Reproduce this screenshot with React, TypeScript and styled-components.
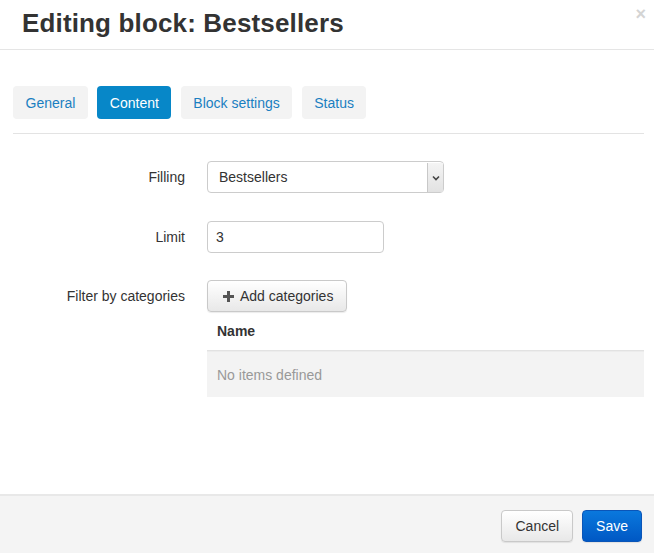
import React from "react";
import styled, { createGlobalStyle } from "styled-components";

const Global = createGlobalStyle`
  html, body { margin: 0; padding: 0; background: #fff; }
  body { font-family: "Liberation Sans", Arial, sans-serif; font-size: 14px; color: #333; }
  #root { height: 100vh; }
`;

const Dialog = styled.div`
  height: 100vh;
  display: flex;
  flex-direction: column;
  box-sizing: border-box;
`;

const Header = styled.div`
  position: relative;
  height: 50px;
  box-sizing: border-box;
  border-bottom: 1px solid #e5e5e5;
  padding: 0 0 0 22px;
  display: flex;
  align-items: center;
`;

const Title = styled.h3`
  margin: 0;
  margin-top: -3px;
  font-size: 26px;
  font-weight: bold;
  color: #333;
  letter-spacing: 0.15px;
`;

const Close = styled.span`
  position: absolute;
  right: 8px;
  top: 6px;
  font-size: 18px;
  font-weight: bold;
  color: #d4d4d4;
  line-height: 16px;
`;

const Body = styled.div`
  flex: 1;
  padding: 36px 10px 0 13px;
`;

const Tabs = styled.div`
  display: flex;
  gap: 9.5px;
  padding-bottom: 14px;
  border-bottom: 1px solid #e3e3e3;
`;

const Tab = styled.div<{ $active?: boolean }>`
  height: 33px;
  box-sizing: border-box;
  padding: 0 12.5px;
  display: flex;
  align-items: center;
  border-radius: 4px;
  font-size: 14px;
  background: ${(p) => (p.$active ? "#0787c8" : "#f3f3f3")};
  color: ${(p) => (p.$active ? "#fff" : "#1a7fc1")};
`;

const Form = styled.div`
  padding-top: 27px;
  display: flex;
  flex-direction: column;
  gap: 27.5px;
`;

const Row = styled.div`
  display: grid;
  grid-template-columns: 172px 1fr;
  column-gap: 22px;
  align-items: start;
`;

const Label = styled.label`
  text-align: right;
  font-size: 14px;
  color: #333;
  line-height: 32px;
`;

const SelectBox = styled.div`
  position: relative;
  width: 237px;
  height: 32px;
  box-sizing: border-box;
  border: 1px solid #ccc;
  border-radius: 4px;
  display: flex;
  align-items: center;
  padding-left: 11px;
  font-size: 14px;
  color: #333;
`;

const SelectArrow = styled.div`
  position: absolute;
  right: 0;
  top: 1px;
  bottom: 0;
  width: 16px;
  box-sizing: border-box;
  border-left: 1px solid #c8c8c8;
  background: linear-gradient(#f4f4f4, #e2e2e2);
  display: flex;
  align-items: center;
  justify-content: center;
`;

const Input = styled.div`
  width: 177px;
  height: 32px;
  box-sizing: border-box;
  border: 1px solid #ccc;
  border-radius: 4px;
  display: flex;
  align-items: center;
  padding-left: 8px;
  font-size: 14px;
  color: #333;
`;

const Field = styled.div`
  display: flex;
  flex-direction: column;
`;

const Button = styled.button<{ $primary?: boolean }>`
  height: 32px;
  box-sizing: border-box;
  border-radius: 4px;
  font-family: "Liberation Sans", Arial, sans-serif;
  font-size: 14px;
  padding: 0 13px;
  display: inline-flex;
  align-items: center;
  gap: 6px;
  cursor: pointer;
  border: 1px solid ${(p) => (p.$primary ? "#0a55b8" : "#c9c9c9")};
  color: ${(p) => (p.$primary ? "#fff" : "#333")};
  background: ${(p) =>
    p.$primary
      ? "linear-gradient(#0a78dd, #0058c4)"
      : "linear-gradient(#ffffff, #e8e8e8)"};
  box-shadow: 0 1px 1px rgba(0, 0, 0, 0.08);
`;

const AddButton = styled(Button)`
  align-self: flex-start;
  padding: 0 13px 0 15px;
`;

const Table = styled.div`
  margin: 0;
`;

const TableHead = styled.div`
  height: 39px;
  box-sizing: border-box;
  padding: 0 10px;
  display: flex;
  align-items: center;
  font-weight: bold;
  font-size: 14px;
  color: #333;
  border-bottom: 1px solid #e2e2e2;
`;

const EmptyRow = styled.div`
  height: 46px;
  box-sizing: border-box;
  padding: 0 10px;
  display: flex;
  align-items: center;
  background: #f3f3f3;
  color: #999;
  font-size: 14px;
  border-top: 1px solid #ececec;
`;

const Footer = styled.div`
  height: 59px;
  box-sizing: border-box;
  border-top: 2px solid #e8e8e8;
  background: #f4f4f4;
  display: flex;
  justify-content: flex-end;
  align-items: center;
  gap: 9px;
  padding: 2px 12px 0 0;
`;

export default function App() {
  return (
    <>
      <Global />
      <Dialog>
        <Header>
          <Title>Editing block: Bestsellers</Title>
          <Close>×</Close>
        </Header>
        <Body>
          <Tabs>
            <Tab>General</Tab>
            <Tab $active>Content</Tab>
            <Tab>Block settings</Tab>
            <Tab>Status</Tab>
          </Tabs>
          <Form>
            <Row>
              <Label>Filling</Label>
              <SelectBox>
                Bestsellers
                <SelectArrow>
                  <svg width="8" height="6" viewBox="0 0 8 6">
                    <path d="M1 1.5 L4 4.5 L7 1.5" fill="none" stroke="#444" strokeWidth="1.6" />
                  </svg>
                </SelectArrow>
              </SelectBox>
            </Row>
            <Row>
              <Label>Limit</Label>
              <Input>3</Input>
            </Row>
            <Row>
              <Label>Filter by categories</Label>
              <Field>
                <AddButton>
                  <svg width="11" height="11" viewBox="0 0 11 11">
                    <path d="M4 0h3v4h4v3H7v4H4V7H0V4h4z" fill="#555" />
                  </svg>
                  Add categories
                </AddButton>
                <Table>
                  <TableHead>Name</TableHead>
                  <EmptyRow>No items defined</EmptyRow>
                </Table>
              </Field>
            </Row>
          </Form>
        </Body>
        <Footer>
          <Button>Cancel</Button>
          <Button $primary>Save</Button>
        </Footer>
      </Dialog>
    </>
  );
}
